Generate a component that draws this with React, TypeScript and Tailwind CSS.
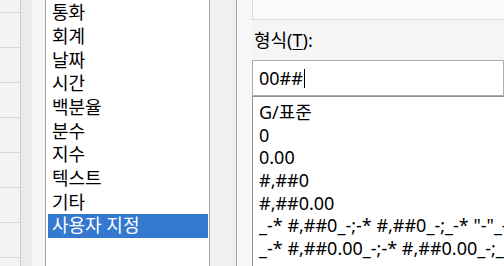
const categories = ["통화", "회계", "날짜", "시간", "백분율", "분수", "지수", "텍스트", "기타", "사용자 지정"];

const formats = [
  "G/표준",
  "0",
  "0.00",
  "#,##0",
  "#,##0.00",
  '_-* #,##0_-;-* #,##0_-;_-* "-"_-;_-@_-',
  '_-* #,##0.00_-;-* #,##0.00_-;_-* "-"??_-;_-@_-',
];

const gridLines = [0, 1, 2, 3, 4, 5, 6, 7];

export default function App() {
  const selected = "사용자 지정";

  return (
    <div className="flex w-[504px] h-[266px] overflow-hidden bg-[#f0f0f0] text-[18px] text-black font-['Noto_Sans','Noto_Sans_CJK_KR',sans-serif]">
      {/* sheet cells peeking from behind */}
      <div className="flex flex-col w-[21px] shrink-0 bg-[#f3f3f3] border-r border-[#cdcdcd] pt-[12px]">
        {gridLines.map((i) => (
          <div key={i} className="h-[35px] shrink-0 border-t border-[#d6d6d6]" />
        ))}
      </div>
      <div className="w-[11px] shrink-0 bg-[#ebebeb]" />
      <div className="w-[13px] shrink-0 bg-[#f5f5f5]" />

      {/* category list */}
      <div className="flex flex-col w-[165px] shrink-0 bg-white border-x border-[#a3a3a3] pt-[1px]">
        {categories.map((c) => (
          <div
            key={c}
            className={
              c === selected
                ? "flex items-center h-[23.67px] shrink-0 ml-[2px] mr-px pl-[4px] bg-[#3478d0] text-white whitespace-nowrap"
                : "flex items-center h-[23.67px] shrink-0 ml-[2px] mr-px pl-[4px] whitespace-nowrap"
            }
          >
            {c}
          </div>
        ))}
      </div>

      <div className="w-[26px] shrink-0 bg-[#f0f0f0]" />
      <div className="w-px shrink-0 bg-[#a0a0a0]" />
      <div className="w-px shrink-0 bg-white" />
      <div className="w-[14px] shrink-0 bg-[#f7f7f7]" />

      {/* format panel */}
      <div className="flex flex-col flex-1 min-w-0 bg-[#f5f5f5]">
        <div className="h-[20px] shrink-0 bg-[#fafafa] border-l border-b border-[#dadada]" />

        <div className="mt-[8px] h-[24px] flex items-center pl-[2px] whitespace-nowrap">
          형식(<span className="underline underline-offset-2">T</span>):
        </div>

        <div className="mt-[8px] h-[36px] shrink-0 flex items-center bg-white border border-[#ababab] pl-[6px] whitespace-nowrap">
          <span>00##</span>
          <span className="ml-px w-px h-[19px] bg-black" />
        </div>

        <div className="flex-1 bg-white border-l border-t border-[#8f8f8f] pt-[4px] pl-[6px]">
          {formats.map((f) => (
            <div key={f} className="flex items-center h-[22.7px] whitespace-nowrap">
              {f}
            </div>
          ))}
        </div>
      </div>
    </div>
  );
}
